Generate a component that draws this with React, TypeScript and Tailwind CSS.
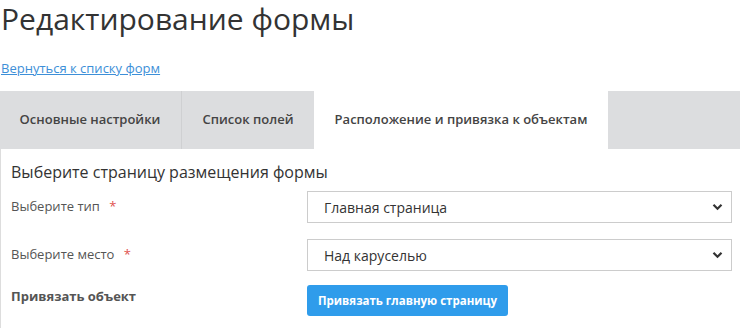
import React from "react";

const Chevron = () => (
  <svg className="pointer-events-none absolute right-[9px] top-1/2 -translate-y-1/2" width="11" height="8" viewBox="0 0 11 8">
    <path d="M1.5 1.8 L5.5 5.8 L9.5 1.8" fill="none" stroke="#333" strokeWidth="2.2" />
  </svg>
);

const SelectBox = ({ value }: { value: string }) => (
  <div className="relative flex-1">
    <select
      className="h-[32px] w-full appearance-none border border-[#cccccc] bg-white pl-[16px] text-[14px] text-[#333] outline-none"
      defaultValue={value}
    >
      <option>{value}</option>
    </select>
    <Chevron />
  </div>
);

export default function App() {
  return (
    <div className="w-[740px] bg-white" style={{ fontFamily: '"Open Sans", "Noto Sans", sans-serif' }}>
      <h1 className="pl-[1px] pt-[2px] text-[30px] leading-[34px] text-[#333333]">Редактирование формы</h1>
      <div className="mt-[19px] pl-[1px]">
        <a href="#" className="text-[13px] leading-[18px] text-[#3d8fd8] underline">
          Вернуться к списку форм
        </a>
      </div>
      <div className="mt-[12px] flex h-[58px] bg-[#dcdddf] text-[13px] font-semibold text-[#444]">
        <div className="flex w-[182px] items-center justify-center border-r border-[#cfd0d2] pr-[1px]">Основные настройки</div>
        <div className="flex w-[132px] items-center justify-center">Список полей</div>
        <div className="flex w-[294px] items-center justify-center bg-white">Расположение и привязка к объектам</div>
        <div className="flex-1" />
      </div>
      <div className="border-l border-[#dddddd] pb-[12px] pl-[10px] pr-[8px]">
        <div className="pt-[12px] text-[16px] leading-[22px] text-[#333]">Выберите страницу размещения формы</div>
        <div className="mt-[8px] flex items-center">
          <div className="w-[296px] text-[13px] text-[#555]">
            Выберите тип <span className="ml-[6px] text-[#e0524f]">*</span>
          </div>
          <SelectBox value="Главная страница" />
        </div>
        <div className="mt-[16px] flex items-center">
          <div className="w-[296px] text-[13px] text-[#555]">
            Выберите место <span className="ml-[6px] text-[#e0524f]">*</span>
          </div>
          <SelectBox value="Над каруселью" />
        </div>
        <div className="mt-[14px] flex items-start">
          <div className="w-[296px] pt-[2px] text-[13px] font-bold text-[#555]">Привязать объект</div>
          <button className="h-[31px] w-[201px] rounded-[3px] bg-[#2f9ceb] text-[11.5px] font-bold text-white">
            Привязать главную страницу
          </button>
        </div>
      </div>
    </div>
  );
}
